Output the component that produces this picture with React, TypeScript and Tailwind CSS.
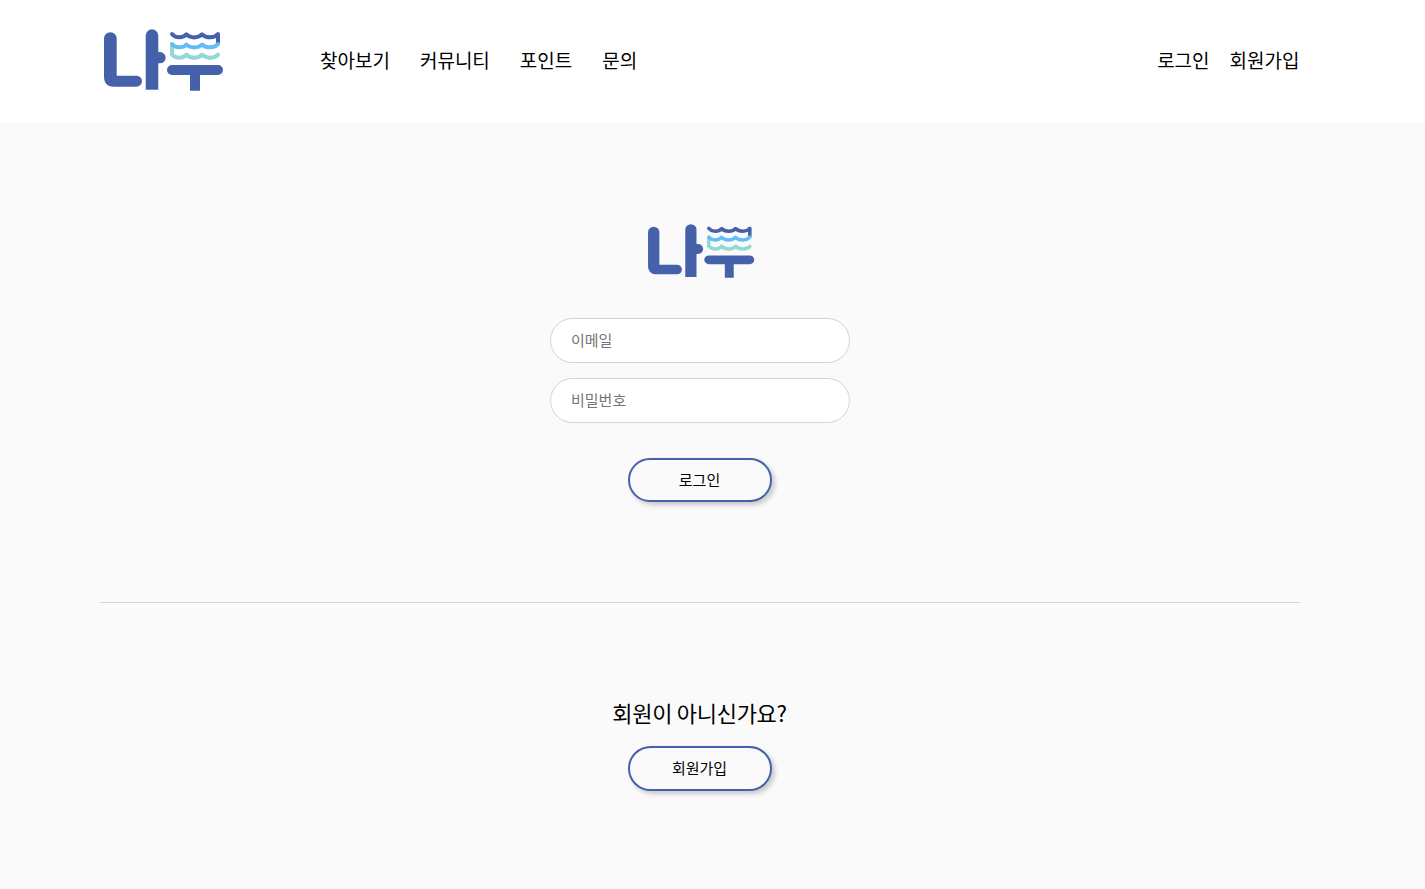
import { useState } from "react";

const MENUS = ["찾아보기", "커뮤니티", "포인트", "문의"];

const Logo = ({ className }: { className: string }) => {
  return (
    <svg viewBox="0 0 140 80" preserveAspectRatio="none" className={className} fill="none">
      {/* left block */}
      <path
        d="M9 18.6a6.35 6.35 0 0 1 12.7 0V55.7H41.5a5.5 5.5 0 0 1 0 11H19C12 66.7 9 63 9 56.5Z"
        fill="#4561a9"
      />
      <path
        d="M50.7 69.7V15.6a6.3 6.3 0 0 1 12.6 0V32H65a5.65 5.65 0 0 1 0 11.3H63.3V69.7Z"
        fill="#4561a9"
      />
      {/* right block */}
      <path d="M77 45H123a5 5 0 0 1 0 10H105V70.7H95V55H77a5 5 0 0 1 0-10Z" fill="#4561a9" />
      {/* waves */}
      <g strokeWidth="4" strokeLinecap="round" strokeLinejoin="round">
        <path
          d="M77 26V34.5C80.5 38.7 88 38.7 91.4 34.6C95 38.7 103.5 38.7 107 34.6C111 38.7 119.5 38.7 123 34.6"
          stroke="#8fdad8"
        />
        <path
          d="M77 14C80.5 18.4 88 18.4 91.4 14.3C95 18.4 103.5 18.4 107 14.3C111 18.4 119.5 18.4 123 14V23"
          stroke="#4561a9"
        />
        <path
          d="M77 24C80.5 28.4 88 28.4 91.4 24.5C95 28.4 103.5 28.4 107 24.5C111 28.4 119.5 28.4 123 24"
          stroke="#62bdf6"
        />
      </g>
    </svg>
  );
};

const Header = () => {
  return (
    <header className="h-[123px] bg-white">
      <div className="ml-[100px] flex h-[120px] w-[1200px] items-center text-[19px]">
        <a href="#" className="-ml-[5px] w-[225px]">
          <Logo className="h-20 w-[140px]" />
        </a>
        <nav className="flex gap-[30px]">
          {MENUS.map((menu) => (
            <a key={menu} href="#">
              {menu}
            </a>
          ))}
        </nav>
        <div className="mr-[0.5px] ml-auto flex gap-5">
          <a href="#">로그인</a>
          <a href="#">회원가입</a>
        </div>
      </div>
    </header>
  );
};

const inputStyle =
  "h-[45px] w-[300px] rounded-full border border-[#ced4da] bg-white px-5 pb-0.5 text-[15px] outline-none placeholder:text-[#757575]";

const buttonStyle =
  "w-36 rounded-full border-2 border-[#4561a9] bg-[#fafafa] pr-px text-[15px] shadow-[3px_3px_5px_rgba(0,0,0,0.2)]";

const App = () => {
  const [email, setEmail] = useState("");
  const [password, setPassword] = useState("");

  return (
    <div className="min-h-screen bg-[#fafafa] font-['Noto_Sans_CJK_KR',sans-serif] text-black">
      <Header />
      <main className="ml-[100px] w-[1200px]">
        <form
          className="flex h-[480px] flex-col items-center border-b border-[#d6d6d6] pt-[93px]"
          onSubmit={(e) => e.preventDefault()}
        >
          <Logo className="mr-[-5px] h-[70px] w-[125px]" />
          <input
            type="email"
            placeholder="이메일"
            value={email}
            onChange={(e) => setEmail(e.target.value)}
            className={`${inputStyle} mt-8`}
          />
          <input
            type="password"
            placeholder="비밀번호"
            value={password}
            onChange={(e) => setPassword(e.target.value)}
            className={`${inputStyle} mt-[15px]`}
          />
          <button type="submit" className={`${buttonStyle} mt-[35px] h-11`}>
            로그인
          </button>
        </form>
        <section className="flex flex-col items-center pt-[93px]">
          <p className="pr-px text-[22px] leading-[33px] tracking-[-0.3px]">회원이 아니신가요?</p>
          <button type="button" className={`${buttonStyle} mt-[17px] h-[45px]`}>
            회원가입
          </button>
        </section>
      </main>
    </div>
  );
};

export default App;
